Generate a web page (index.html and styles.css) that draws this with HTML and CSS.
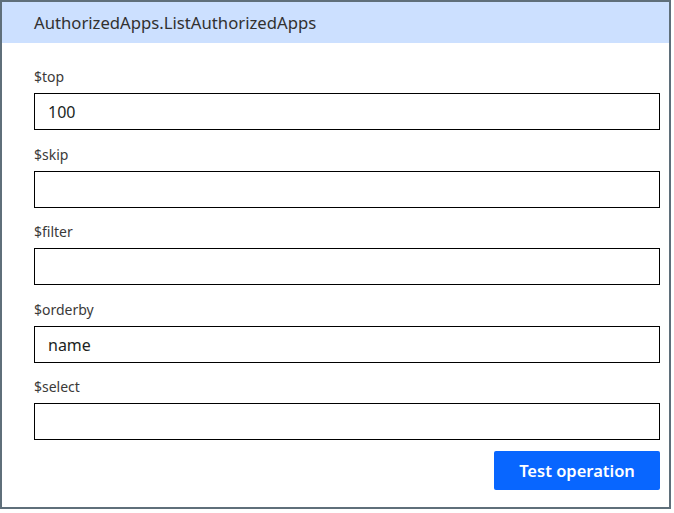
FILE: index.html
```html
<!DOCTYPE html>
<html>
<head>
<meta charset="utf-8">
<link rel="stylesheet" href="styles.css">
</head>
<body>
<div class="panel">
  <div class="header">AuthorizedApps.ListAuthorizedApps</div>
  <div class="content">
    <div class="field">
      <div class="label">$top</div>
      <div class="input">100</div>
    </div>
    <div class="field">
      <div class="label">$skip</div>
      <div class="input"></div>
    </div>
    <div class="field">
      <div class="label">$filter</div>
      <div class="input"></div>
    </div>
    <div class="field">
      <div class="label">$orderby</div>
      <div class="input">name</div>
    </div>
    <div class="field">
      <div class="label">$select</div>
      <div class="input"></div>
    </div>
    <div class="actions">
      <button class="btn">Test operation</button>
    </div>
  </div>
</div>
</body>
</html>
```
FILE: styles.css
```css
html, body {
  margin: 0;
  padding: 0;
  background: #ffffff;
}
body {
  font-family: "Noto Sans", "Open Sans", sans-serif;
  color: #323130;
}
.panel {
  width: 667px;
  height: 505px;
  border: 2px solid #5f6f7a;
  background: #ffffff;
  display: flex;
  flex-direction: column;
}
.header {
  height: 41px;
  background: #cce0ff;
  padding-left: 32px;
  display: flex;
  align-items: center;
  font-size: 16.7px;
  color: #323130;
}
.content {
  padding: 24px 9px 0 32px;
  display: flex;
  flex-direction: column;
  gap: 14.5px;
}
.field {
  display: flex;
  flex-direction: column;
}
.label {
  font-size: 14px;
  line-height: 19px;
  height: 19px;
  margin-bottom: 7px;
  color: #3b3a39;
}
.input {
  box-sizing: border-box;
  height: 37px;
  border: 1px solid #000000;
  padding-left: 13px;
  padding-top: 1px;
  display: flex;
  align-items: center;
  font-size: 16px;
  color: #201f1e;
}
.actions {
  display: flex;
  justify-content: flex-end;
  margin-top: -3.5px;
}
.btn {
  width: 166px;
  height: 39px;
  border: none;
  border-radius: 2px;
  background: #0866ff;
  color: #ffffff;
  font-family: "Noto Sans", "Open Sans", sans-serif;
  font-size: 16.5px;
  font-weight: 600;
  padding: 0;
}
```
